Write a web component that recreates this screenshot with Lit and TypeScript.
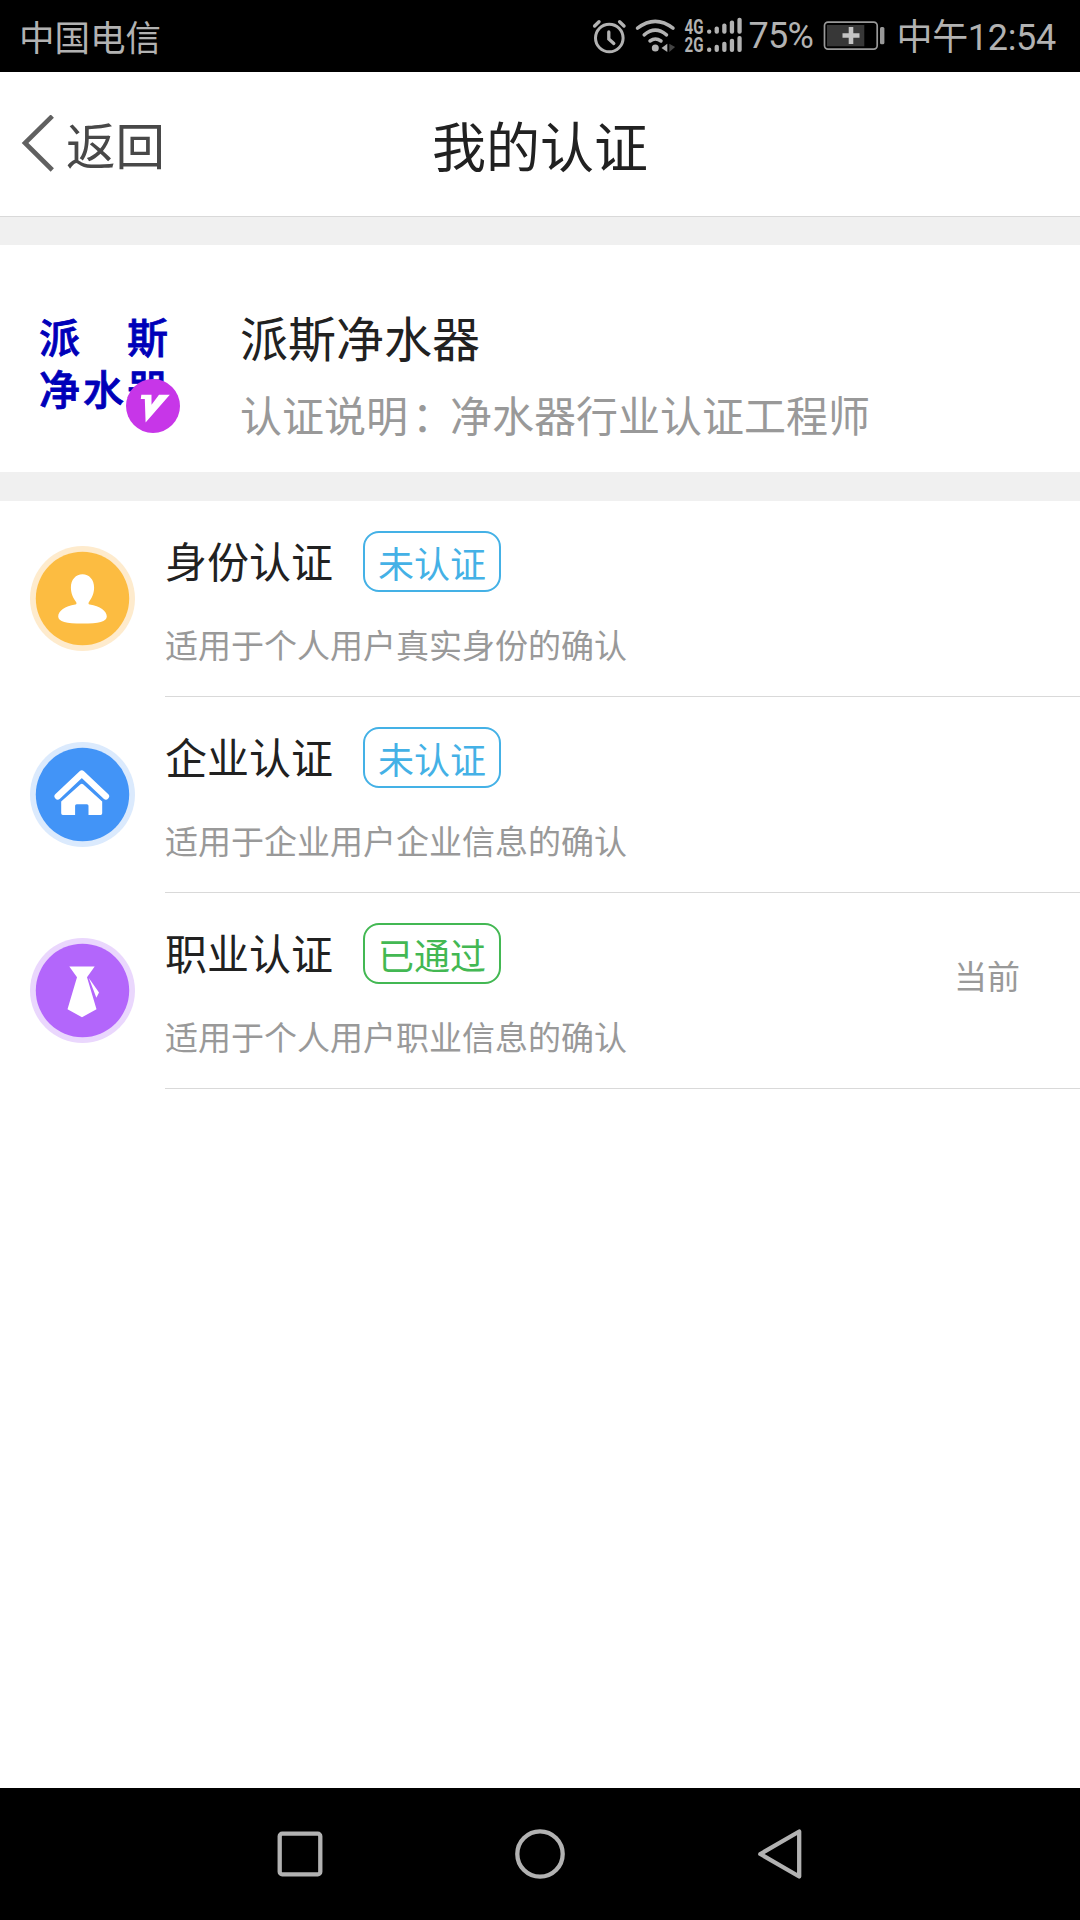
import { LitElement, html, css, svg } from "lit";
import { customElement, property } from "lit/decorators.js";

const GLYPHS = {
  person: svg`<path fill="#fff" d="M52.500 28.300c6.600 0 11.600 5.300 11.600 13.300 0 6.200-2.300 10.700-5 14.100-1 1.300-.8 2.400.6 2.900C70 60.300 76.800 65 76.800 70.600c0 5.200-8 7-24.300 7s-24.300-1.800-24.300-7C28.200 65 35 60.300 45.300 58.600c1.400-.5 1.600-1.600.6-2.900-2.700-3.400-5-7.900-5-14.100 0-8 5-13.300 11.600-13.300z"/>`,
  house: svg`<path fill="none" stroke="#fff" stroke-width="6.400" stroke-linecap="round" stroke-linejoin="round" d="M27.700 54.400 51.800 31.600 75.900 54.400"/><path fill="#fff" d="M50.500 42.200q1.300-1 2.600 0L72.200 59.500V71.300q0 1.600-1.600 1.600H58.500V63.800q0-1.600-1.600-1.600H46.700q-1.600 0-1.600 1.600v9.100H32.800q-1.600 0-1.600-1.600V59.500z"/>`,
  tie: svg`<path fill="#fff" d="M39.300 28.500h25.400L57 39.300 66.500 71.300 52 79.200 37.500 71.300 47 39.300z"/><path fill="#fff" d="M58.800 40 69 54.500l-2.600 5.200z"/>`,
};

interface Cert {
  name: string;
  status: string;
  passed: boolean;
  note: string;
  glyph: keyof typeof GLYPHS;
  fill: string;
  ring: string;
  current: boolean;
}

const CERTS: Cert[] = [
  { name: "身份认证", status: "未认证", passed: false, note: "适用于个人用户真实身份的确认", glyph: "person", fill: "#fcbc41", ring: "#feebcd", current: false },
  { name: "企业认证", status: "未认证", passed: false, note: "适用于企业用户企业信息的确认", glyph: "house", fill: "#4294f7", ring: "#dbeafd", current: false },
  { name: "职业认证", status: "已通过", passed: true, note: "适用于个人用户职业信息的确认", glyph: "tie", fill: "#b366fb", ring: "#ead7fd", current: true },
];

@customElement("status-bar")
class StatusBar extends LitElement {
  static styles = css`
    :host { display: flex; align-items: flex-start; height: 72px; box-sizing: border-box; padding: 0 24px 0 19px; background: #000; color: #b2b2b2; font: 400 35.5px/72px "Noto Sans CJK SC", sans-serif; }
    .spacer { flex: 1; }
    .num { font: 400 36px/72px Roboto, "Noto Sans CJK SC", sans-serif; }
    .percent { width: 73px; margin-left: 3px; letter-spacing: -0.7px; }
    .clock { margin-top: 2px; margin-left: 9px; letter-spacing: -0.3px; }
    svg { display: block; flex: none; }
    .g { font: 700 20.5px Roboto, sans-serif; }
  `;
  render() {
    const bars = (base: number) =>
      [4.4, 7.2, 10.2, 13.2, 16].map((h, i) => svg`<rect x=${24 + i * 7.6} y=${base - h} width="4.300" height=${h} rx="2"/>`);
    return html`
      <span>中国电信</span>
      <span class="spacer"></span>
      <svg width="44" height="72" viewBox="590 0 44 72" fill="none" stroke="#b2b2b2" stroke-linecap="round">
        <circle cx="609.300" cy="38" r="13.800" stroke-width="3"/>
        <path stroke-width="3.300" d="M608.800 32v7l5 4.500"/>
        <path stroke-width="3.400" d="M594.600 26l4.400-4.300M624 26l-4.400-4.300"/>
      </svg>
      <svg width="46" height="72" viewBox="634 0 46 72" fill="none" stroke="#b2b2b2" stroke-width="3.500" stroke-linecap="round">
        <path d="M637.500 28.200Q655.300 14.500 673 28.200M644.200 34.800Q655.300 25.500 666.500 34.800M650 41Q655.300 37 661 41"/>
        <circle cx="655.300" cy="48" r="3.500" fill="#b2b2b2" stroke="none"/>
        <path d="M667.300 43.800v8.200l-5.800-4z" fill="#b2b2b2" stroke="none"/>
        <path d="M669.300 43.800v8.200l5.800-5z" fill="#444" stroke="none"/>
      </svg>
      <svg width="65" height="72" viewBox="-3 0 65 72" fill="#b2b2b2">
        <text class="g" x="1.500" y="33.700" textLength="19" lengthAdjust="spacingAndGlyphs">4G</text>
        <text class="g" x="1.500" y="51.900" textLength="19" lengthAdjust="spacingAndGlyphs">2G</text>
        ${bars(33.8)}${bars(52)}
      </svg>
      <span class="num percent">75%</span>
      <svg width="66" height="72" viewBox="821 0 66 72">
        <rect x="824.500" y="22.100" width="52.700" height="27" rx="3.500" fill="none" stroke="#999" stroke-width="1.700"/>
        <rect x="827" y="25" width="37.300" height="21.300" fill="#373737"/>
        <path d="M851 27v17M842.500 35.500h17" stroke="#c4c4c4" stroke-width="4.600"/>
        <rect x="880" y="27" width="4.400" height="17.300" rx="1.500" fill="#999"/>
      </svg>
      <span class="num clock">中午12:54</span>
    `;
  }
}

@customElement("title-bar")
class TitleBar extends LitElement {
  static styles = css`
    :host { display: grid; grid-template-columns: 1fr auto 1fr; align-items: center; height: 144px; box-sizing: border-box; padding: 0 20px; background: #fff; }
    .back { display: flex; align-items: center; gap: 11px; color: #484848; font-size: 49.5px; line-height: 60px; }
    .back svg { display: block; }
    .title { color: #212121; font-size: 54px; line-height: 72px; padding-top: 1px; }
  `;
  render() {
    return html`
      <div class="back">
        <svg width="35" height="58" viewBox="0 0 35 58" fill="none" stroke="#606060" stroke-width="4.600"><path d="M32.300 1.100 5 28 32.300 55"/></svg>
        <span>返回</span>
      </div>
      <div class="title">我的认证</div>
    `;
  }
}

@customElement("profile-card")
class ProfileCard extends LitElement {
  static styles = css`
    :host { display: flex; height: 227px; box-sizing: border-box; padding: 64px 40px 0 39px; background: #fff; }
    .avatar { position: relative; width: 201px; color: #0000b9; font-size: 41px; font-weight: 500; -webkit-text-stroke: 0.8px #0000b9; line-height: 52px; letter-spacing: 3px; }
    .line { display: block; white-space: pre; }
    .badge { position: absolute; left: 87px; top: 70px; }
    .name { margin-top: 1px; color: #212121; font-size: 48px; line-height: 52px; }
    .desc { margin-top: 27px; color: #999; font-size: 42px; line-height: 50px; }
    .colon { padding-left: 4px; margin-right: -4px; }
  `;
  render() {
    return html`
      <div class="avatar">
        <span class="line">派　斯</span><span class="line">净水器</span>
        <svg class="badge" width="54" height="54" viewBox="0 0 54 54">
          <circle cx="27" cy="27" r="27" fill="#c736e8"/>
          <path fill="#fff" d="M15.300 15.700h10.200v10L33 15.700H43.800L19.600 43.500 18.800 20h-4z"/>
        </svg>
      </div>
      <div>
        <div class="name">派斯净水器</div>
        <div class="desc">认证说明<span class="colon">：</span>净水器行业认证工程师</div>
      </div>
    `;
  }
}

@customElement("cert-row")
class CertRow extends LitElement {
  @property({ attribute: false }) cert!: Cert;
  static styles = css`
    :host { display: flex; align-items: center; height: 196px; padding-left: 30px; background: #fff; }
    .icon { flex: none; display: block; margin: 0 30px 1px 0; }
    .body { flex: 1; display: flex; justify-content: space-between; height: 196px; box-sizing: border-box; border-bottom: 1px solid #d9d9d9; padding: 30px 60px 0 0; }
    .head { display: flex; align-items: center; gap: 30px; height: 61px; }
    .name { color: #212121; font-size: 42px; line-height: 56px; padding-bottom: 4px; }
    .tag { box-sizing: border-box; height: 61px; width: 138px; padding-left: 13px; border: 2px solid #44b1e6; border-radius: 16px; color: #44b1e6; font-size: 36px; line-height: 58px; white-space: nowrap; }
    .passed { color: #43b853; border-color: #43b853; }
    .note { margin-top: 30px; color: #999; font-size: 33px; line-height: 44px; }
    .current { padding-top: 30px; color: #999; font-size: 33px; line-height: 44px; }
  `;
  render() {
    const c = this.cert;
    return html`
      <svg class="icon" width="105" height="105" viewBox="0 0 105 105">
        <circle cx="52.500" cy="52.500" r="52.500" fill=${c.ring}/>
        <circle cx="52.500" cy="52.500" r="46.700" fill=${c.fill}/>
        ${GLYPHS[c.glyph]}
      </svg>
      <div class="body">
        <div>
          <div class="head"><span class="name">${c.name}</span><span class="tag ${c.passed ? "passed" : ""}">${c.status}</span></div>
          <div class="note">${c.note}</div>
        </div>
        ${c.current ? html`<div class="current">当前</div>` : ""}
      </div>
    `;
  }
}

@customElement("nav-bar")
class NavBar extends LitElement {
  static styles = css`
    :host { display: flex; justify-content: center; align-items: center; gap: 180px; height: 132px; background: #000; }
    svg { display: block; }
  `;
  render() {
    return html`
      <svg width="60" height="60" viewBox="0 0 60 60" fill="none" stroke="#b2b2b2" stroke-width="4.300"><rect x="9.700" y="9.700" width="40.600" height="40.600" rx="2.500"/></svg>
      <svg width="60" height="60" viewBox="0 0 60 60" fill="none" stroke="#b2b2b2" stroke-width="4.300"><circle cx="30" cy="30" r="22.700"/></svg>
      <svg width="60" height="60" viewBox="0 0 60 60" fill="none" stroke="#b2b2b2" stroke-width="4.300" stroke-linejoin="round"><path d="M49.200 7.500V52.500L10.300 30z"/></svg>
    `;
  }
}

@customElement("app-root")
class AppRoot extends LitElement {
  static styles = css`
    :host { display: flex; flex-direction: column; width: 1080px; height: 1920px; overflow: hidden; background: #fff; font-family: "Noto Sans CJK SC", sans-serif; font-weight: 400; }
    .gap { height: 29px; background: #f0f0f0; box-sizing: border-box; }
    .edge { border-top: 1px solid #d9d9d9; }
    .list { flex: 1; }
  `;
  render() {
    return html`
      <status-bar></status-bar>
      <title-bar></title-bar>
      <div class="gap edge"></div>
      <profile-card></profile-card>
      <div class="gap"></div>
      <div class="list">${CERTS.map((c) => html`<cert-row .cert=${c}></cert-row>`)}</div>
      <nav-bar></nav-bar>
    `;
  }
}
